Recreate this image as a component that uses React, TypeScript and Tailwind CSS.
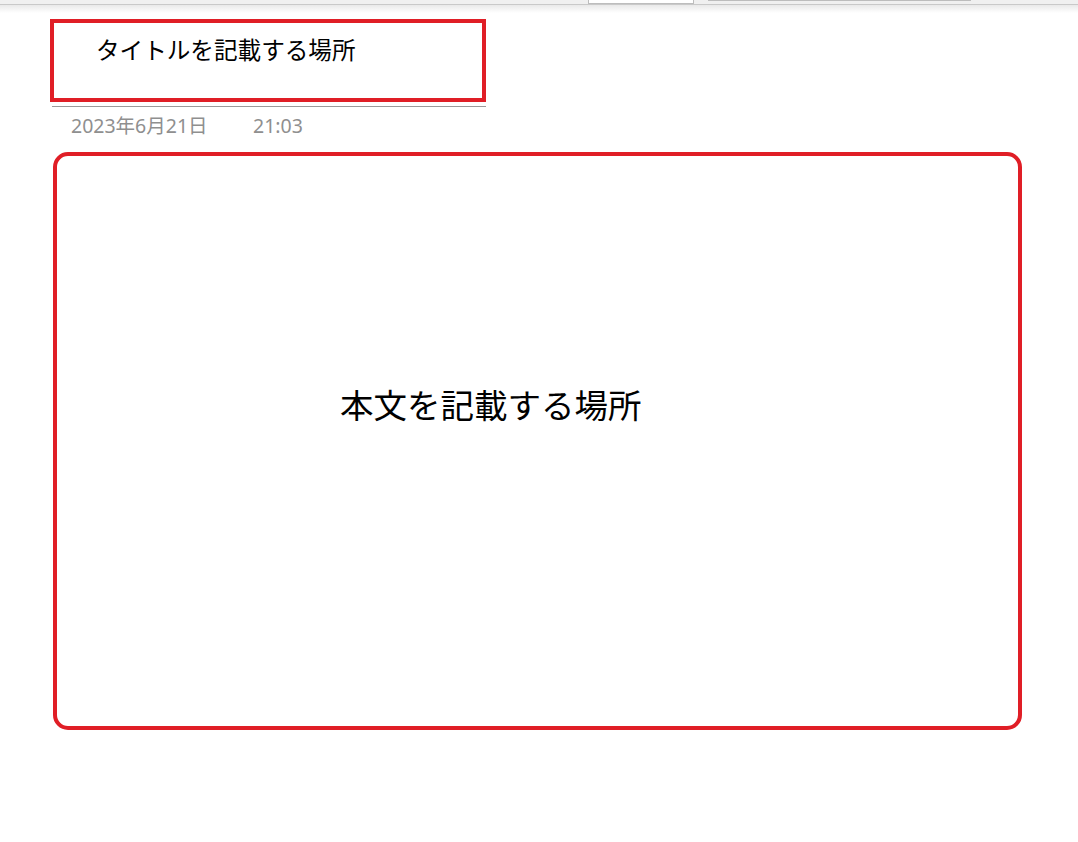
import React from "react";

export default function App() {
  return (
    <div className="relative w-[1078px] h-[842px] bg-white overflow-hidden" style={{ fontFamily: '"Noto Sans", "Noto Sans CJK JP", sans-serif' }}>
      {/* top toolbar remnant */}
      <div className="h-[5px] bg-[#f0f0f0] border-b border-[#c9c9c9] relative">
        <div className="absolute left-[588px] top-0 w-[106px] h-[4px] bg-white border border-t-0 border-[#bdbdbd]" />
        <div className="absolute left-[708px] top-0 w-[263px] h-[1px] bg-[#bdbdbd]" />
      </div>
      <div className="h-[8px] bg-gradient-to-b from-[#e9e9e9] to-white" />

      <div className="pl-[50px] pt-[6px]">
        <div className="w-[436px] h-[83px] border-[4px] border-[#e01e26] flex items-start pl-[42px] pt-[9px]">
          <span className="text-[23.6px] leading-[34px] text-black" style={{ fontFamily: '"Noto Sans CJK JP", sans-serif' }}>
            タイトルを記載する場所
          </span>
        </div>
        <div className="ml-[2px] w-[434px] h-[1px] bg-[#9a9a9a] mt-[4px]" />
        <div className="flex ml-[21px] mt-[7px] text-[19.5px] leading-[24px] text-[#8f8f8f]" style={{ fontFamily: '"Noto Sans", "Noto Sans CJK JP", sans-serif' }}>
          <span className="w-[182px]">2023年6月21日</span>
          <span>21:03</span>
        </div>
        <div className="ml-[3px] mt-[14px] w-[969px] h-[578px] border-[4px] border-[#e01e26] rounded-[15px] flex items-start pt-[226px]">
          <span className="ml-[283px] text-[33.5px] leading-[44px] text-black" style={{ fontFamily: '"Noto Sans CJK JP", sans-serif' }}>
            本文を記載する場所
          </span>
        </div>
      </div>
    </div>
  );
}
